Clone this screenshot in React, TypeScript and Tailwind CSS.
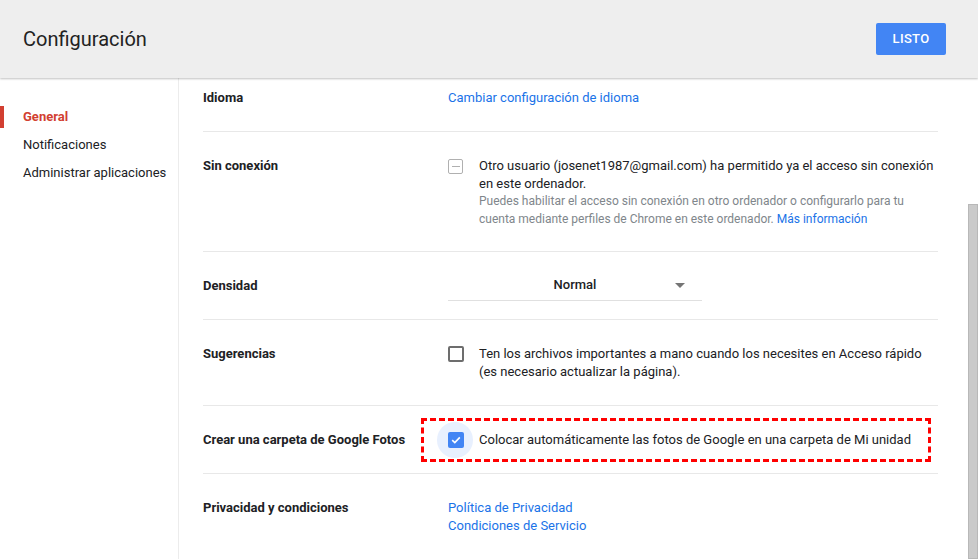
import { ReactNode } from "react";

const font = { fontFamily: "Roboto, 'Liberation Sans', Arial, sans-serif" };

function Row({ label, children, pad = "pt-[25px] pb-[24px]" }: { label: string; children: ReactNode; pad?: string }) {
  return (
    <div className={`flex border-b border-[#e8e8e8] ${pad}`}>
      <div className="w-[245px] shrink-0 text-[13px] font-bold leading-[18px] text-[#202124]">{label}</div>
      <div className="flex-1 text-[13px] leading-[18px] text-[#202124]">{children}</div>
    </div>
  );
}

function Checkbox({ state }: { state: "empty" | "checked" | "indeterminate" }) {
  if (state === "checked") {
    return (
      <div className="relative w-[16px] h-[16px] shrink-0 mt-[1px]">
        <div className="absolute left-[-11px] top-[-10px] w-[36px] h-[36px] rounded-full bg-[#e8f0fe]" />
        <div className="absolute inset-0 rounded-[2px] bg-[#4285f4] flex items-center justify-center">
          <svg width="12" height="12" viewBox="0 0 12 12">
            <path d="M2.2 6.2 L4.8 8.6 L9.8 3.4" fill="none" stroke="white" strokeWidth="1.6" />
          </svg>
        </div>
      </div>
    );
  }
  if (state === "indeterminate") {
    return (
      <div className="w-[15px] h-[15px] shrink-0 mt-[2px] rounded-[2px] border-[1.5px] border-[#b0b0b0] flex items-center justify-center">
        <div className="w-[8px] h-[1.5px] bg-[#b0b0b0]" />
      </div>
    );
  }
  return <div className="w-[16px] h-[16px] shrink-0 mt-[1px] rounded-[2px] border-2 border-[#6d6d6d]" />;
}

export default function App() {
  return (
    <div className="relative w-[978px] h-[559px] overflow-hidden bg-white" style={font}>
      {/* Header */}
      <div className="relative z-10 h-[78px] bg-[#eeeeee] flex items-center justify-between pl-[23px] pr-[32px] shadow-[0_1px_2px_rgba(0,0,0,0.25)]">
        <h1 className="text-[20px] text-[#222] font-normal">Configuración</h1>
        <button className="w-[70px] h-[32px] rounded-[2px] bg-[#4285f4] text-white text-[13px] font-medium tracking-[0.3px]">
          LISTO
        </button>
      </div>

      <div className="flex h-[481px]">
        {/* Sidebar */}
        <div className="w-[179px] shrink-0 border-r border-[#ececec] pt-[25px]">
          <div className="relative h-[28px] flex items-center pl-[23px] text-[13px] font-bold text-[#d23f31]">
            <div className="absolute left-0 top-[3px] w-[4px] h-[22px] bg-[#d23f31]" />
            General
          </div>
          <div className="h-[28px] flex items-center pl-[23px] text-[13px] text-[#202124]">Notificaciones</div>
          <div className="h-[28px] flex items-center pl-[23px] text-[13px] text-[#202124]">Administrar aplicaciones</div>
        </div>

        {/* Content */}
        <div className="flex-1 pl-[24px] pr-[40px]">
          <Row label="Idioma" pad="pt-[11px] pb-[24px]">
            <span className="text-[#1a73e8]">Cambiar configuración de idioma</span>
          </Row>

          <Row label="Sin conexión" pad="pt-[25px] pb-[23px]">
            <div className="flex gap-[16px]">
              <Checkbox state="indeterminate" />
              <div>
                <div>Otro usuario (josenet1987@gmail.com) ha permitido ya el acceso sin conexión</div>
                <div>en este ordenador.</div>
                <div className="-mt-[1px] text-[12px] text-[#80868b]">
                  Puedes habilitar el acceso sin conexión en otro ordenador o configurarlo para tu
                  <br />
                  cuenta mediante perfiles de Chrome en este ordenador.{" "}
                  <span className="text-[#1a73e8]">Más información</span>
                </div>
              </div>
            </div>
          </Row>

          <div className="flex border-b border-[#e8e8e8] pt-[25px] pb-[18px]">
            <div className="w-[245px] shrink-0 text-[13px] font-bold leading-[18px] text-[#202124]">Densidad</div>
            <div className="flex-1">
              <div className="relative w-[254px] h-[24px] border-b border-[#e0e0e0] flex items-start justify-center">
                <span className="-mt-[1px] text-[13px] font-medium leading-[18px] text-[#202124]">Normal</span>
                <svg className="absolute right-[17px] top-[6px]" width="10" height="5" viewBox="0 0 10 5">
                  <path d="M0 0 L10 0 L5 5 Z" fill="#757575" />
                </svg>
              </div>
            </div>
          </div>

          <Row label="Sugerencias">
            <div className="flex gap-[15px]">
              <Checkbox state="empty" />
              <div>
                Ten los archivos importantes a mano cuando los necesites en Acceso rápido
                <br />
                (es necesario actualizar la página).
              </div>
            </div>
          </Row>

          <div className="flex border-b border-[#e8e8e8] pt-[25px] pb-[24px]">
            <div className="w-[245px] shrink-0 text-[13px] font-bold leading-[18px] text-[#202124]">
              Crear una carpeta de Google Fotos
            </div>
            <div className="flex-1 relative">
              <div className="absolute left-[-27px] top-[-13px] w-[510px] h-[44px] border-[3px] border-dashed border-[#ff0000]" />
              <div className="flex gap-[15px] text-[13px] leading-[18px] text-[#202124]">
                <Checkbox state="checked" />
                <div className="relative">Colocar automáticamente las fotos de Google en una carpeta de Mi unidad</div>
              </div>
            </div>
          </div>

          <Row label="Privacidad y condiciones">
            <div className="text-[#1a73e8]">Política de Privacidad</div>
            <div className="text-[#1a73e8]">Condiciones de Servicio</div>
          </Row>
        </div>
      </div>

      {/* Scrollbar thumb */}
      <div className="absolute right-0 top-[204px] w-[10px] h-[355px] bg-[#cacaca] border border-[#b8b8b8]" />
    </div>
  );
}
